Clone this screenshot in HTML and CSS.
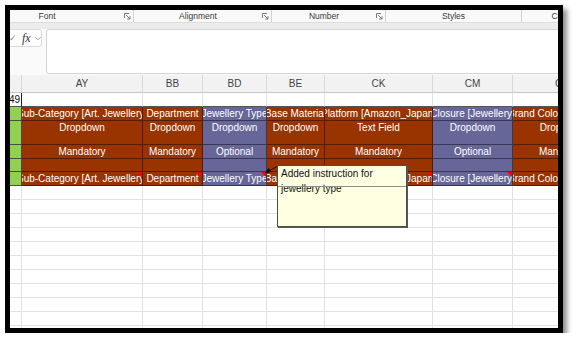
FILE: index.html
```html
<!DOCTYPE html>
<html lang="en">
<head>
    <meta charset="UTF-8">
    <meta name="viewport" content="width=device-width, initial-scale=1.0">
    <title>Listing Template - Comment</title>
    <link rel="stylesheet" href="styles.css">
</head>
<body>
    <div class="frame">
        <!-- ribbon group captions -->
        <div class="ribbon">
            <div class="group group-font">
                <span class="group-label">Font</span>
                <svg class="launcher" viewBox="0 0 7 7"><path d="M0.5 5V0.5H5M2 2l4 4M6 3.2V6H3.2" /></svg>
            </div>
            <div class="group group-align">
                <span class="group-label">Alignment</span>
                <svg class="launcher" viewBox="0 0 7 7"><path d="M0.5 5V0.5H5M2 2l4 4M6 3.2V6H3.2" /></svg>
            </div>
            <div class="group group-number">
                <span class="group-label">Number</span>
                <svg class="launcher" viewBox="0 0 7 7"><path d="M0.5 5V0.5H5M2 2l4 4M6 3.2V6H3.2" /></svg>
            </div>
            <div class="group group-styles">
                <span class="group-label">Styles</span>
            </div>
            <div class="group group-cells">
                <span class="group-label">Cells</span>
            </div>
        </div>

        <!-- formula bar -->
        <div class="formula-bar">
            <div class="fx-box">
                <span class="tick">&#10003;</span>
                <span class="fx">fx</span>
                <svg class="chevron" viewBox="0 0 7 5"><path d="M0.5 1l3 3 3-3" /></svg>
            </div>
            <div class="formula-input"></div>
        </div>

        <!-- sheet -->
        <div class="sheet">
            <div class="cell head"></div>
            <div class="cell head">AY</div>
            <div class="cell head">BB</div>
            <div class="cell head">BD</div>
            <div class="cell head">BE</div>
            <div class="cell head">CK</div>
            <div class="cell head">CM</div>
            <div class="cell head">CO</div>

            <div class="cell rowhead">49</div>
            <div class="cell blank"></div>
            <div class="cell blank"></div>
            <div class="cell blank"></div>
            <div class="cell blank"></div>
            <div class="cell blank"></div>
            <div class="cell blank"></div>
            <div class="cell blank"></div>

            <div class="cell green"></div>
            <div class="cell brown"><span>Sub-Category [Art. Jewellery]</span></div>
            <div class="cell brown"><span>Department</span></div>
            <div class="cell purple"><span>Jewellery Type</span></div>
            <div class="cell brown"><span>Base Material</span></div>
            <div class="cell brown"><span>Platform [Amazon_Japan]</span></div>
            <div class="cell purple"><span>Closure [Jewellery]</span></div>
            <div class="cell brown"><span>Brand Colour [Jewellery]</span></div>

            <div class="cell green"></div>
            <div class="cell brown top"><span>Dropdown</span></div>
            <div class="cell brown top"><span>Dropdown</span></div>
            <div class="cell purple top"><span>Dropdown</span></div>
            <div class="cell brown top"><span>Dropdown</span></div>
            <div class="cell brown top"><span>Text Field</span></div>
            <div class="cell purple top"><span>Dropdown</span></div>
            <div class="cell brown top"><span>Dropdown</span></div>

            <div class="cell green"></div>
            <div class="cell brown"><span>Mandatory</span></div>
            <div class="cell brown"><span>Mandatory</span></div>
            <div class="cell purple"><span>Optional</span></div>
            <div class="cell brown"><span>Mandatory</span></div>
            <div class="cell brown"><span>Mandatory</span></div>
            <div class="cell purple"><span>Optional</span></div>
            <div class="cell brown"><span>Mandatory</span></div>

            <div class="cell green"></div>
            <div class="cell brown"></div>
            <div class="cell brown"></div>
            <div class="cell purple"></div>
            <div class="cell brown"></div>
            <div class="cell brown"></div>
            <div class="cell purple"></div>
            <div class="cell brown"></div>

            <div class="cell green"></div>
            <div class="cell brown note"><span>Sub-Category [Art. Jewellery]</span></div>
            <div class="cell brown note"><span>Department</span></div>
            <div class="cell purple note"><span>Jewellery Type</span></div>
            <div class="cell brown note"><span>Base Material</span></div>
            <div class="cell brown note"><span>Platform [Amazon_Japan]</span></div>
            <div class="cell purple note"><span>Closure [Jewellery]</span></div>
            <div class="cell brown"><span>Brand Colour [Jewellery]</span></div>

            <!-- empty rows below the header block -->
            <div class="strip"></div>
            <div class="strip"></div>
            <div class="strip"></div>
            <div class="strip"></div>
            <div class="strip"></div>
            <div class="strip"></div>
            <div class="strip"></div>
            <div class="strip"></div>

            <svg class="comment-arrow" viewBox="0 0 16 10"><line x1="15" y1="2" x2="4" y2="8" /><polygon points="2.5,8.8 7.4,7.7 5.6,4.5" /></svg>
            <div class="comment">Added instruction for jewellery type</div>
        </div>
    </div>
</body>
</html>
```

FILE: styles.css
```css
* {
    box-sizing: border-box;
}
body {
    margin: 0;
    background-color: #fff;
    font-family: "Liberation Sans", Arial, sans-serif;
}
.frame {
    width: 558px;
    height: 328px;
    margin: 5px 0 0 5px;
    border: 5px solid #000;
    box-shadow: 4px 4px 5px rgba(0, 0, 0, 0.45);
    background-color: #fff;
    overflow: hidden;
}

/* ribbon captions */
.ribbon {
    display: flex;
    height: 13px;
    background-color: #f9f9f9;
    border-bottom: 1px solid #dcdcdc;
    font-size: 8.5px;
    color: #3a3a3a;
}
.group {
    display: flex;
    align-items: center;
    flex: none;
    height: 100%;
    padding-right: 2px;
    border-right: 1px solid #d2d2d2;
}
.group-label {
    flex: 1;
    text-align: center;
}
.launcher {
    width: 7px;
    height: 7px;
    fill: none;
    stroke: #7a7a7a;
    stroke-width: 1;
}
.group-font {
    width: 164px;
    margin-left: -40px;
}
.group-align {
    width: 138px;
}
.group-number {
    width: 114px;
}
.group-styles {
    width: 136px;
    padding-right: 0;
}
.group-cells {
    width: 80px;
    border-right: none;
}

/* formula bar */
.formula-bar {
    display: flex;
    align-items: flex-start;
    height: 52px;
    padding-top: 0;
    border-top: 6px solid #ececec;
    background-color: #fafafa;
}
.fx-box {
    display: flex;
    align-items: center;
    width: 38px;
    height: 18px;
    margin-left: -6px;
    padding-left: 4px;
    background-color: #fff;
    border: 1px solid #dadada;
    border-radius: 3px;
}
.tick {
    font-size: 9px;
    color: #8a8a8a;
    width: 6px;
}
.fx {
    margin-left: 7px;
    font-family: "Liberation Serif", serif;
    font-style: italic;
    font-size: 12px;
    color: #333;
}
.chevron {
    width: 6px;
    height: 5px;
    margin-left: 4px;
    fill: none;
    stroke: #888;
    stroke-width: 1;
}
.formula-input {
    flex: 1;
    height: 45px;
    margin-left: 4px;
    margin-right: -6px;
    background-color: #fff;
    border: 1px solid #d4d4d4;
    border-radius: 3px;
}

/* sheet grid */
.sheet {
    position: relative;
    display: grid;
    grid-template-columns: 12px 121px 60px 64px 58px 108px 80px 100px;
    grid-template-rows: 18px 14px 14px 24px 14px 13px 14px 1fr;
    width: max-content;
    height: 253px;
    font-size: 10px;
}
.cell {
    display: flex;
    align-items: center;
    justify-content: center;
    overflow: hidden;
    white-space: nowrap;
    line-height: 12px;
    border-right: 1px solid #e1e1e1;
    border-bottom: 1px solid #e1e1e1;
}
.cell span {
    flex: none;
}
.head {
    background-color: #f2f2f2;
    border-right-color: #d8d8d8;
    border-bottom-color: #c4c4c4;
    color: #444;
}
.rowhead {
    justify-content: flex-end;
    padding-right: 1px;
    border-right: 1px solid #222;
    border-bottom-color: #555;
    color: #111;
}
.blank {
    border-bottom-color: #555;
}
.green {
    background-color: #92d050;
    border-color: #4a4a4a;
}
.brown,
.purple {
    color: #fff;
    border-color: rgba(0, 0, 0, 0.45);
}
.brown {
    background-color: #993300;
}
.purple {
    background-color: #666699;
}
.top {
    align-items: flex-start;
    padding-top: 1px;
}
.note {
    position: relative;
}
.note::after {
    content: "";
    position: absolute;
    top: 0;
    right: 0;
    border-left: 5px solid transparent;
    border-top: 5px solid #f00;
}
.strip {
    border-right: 1px solid #e1e1e1;
    background: repeating-linear-gradient(#fff 0 13px, #e1e1e1 13px 14px);
}

/* comment popup */
.comment {
    position: absolute;
    left: 267px;
    top: 90px;
    width: 130px;
    height: 62px;
    padding: 0 3px;
    background-color: #ffffe1;
    border: 1px solid #4d4d4d;
    box-shadow: 1px 1px 0 #5a5a5a;
    font-size: 10px;
    line-height: 15px;
    color: #111;
}
.comment::after {
    content: "";
    position: absolute;
    left: 0;
    right: 0;
    top: 20px;
    height: 1px;
    background-color: #8c8c8c;
}
.comment-arrow {
    position: absolute;
    left: 253px;
    top: 89px;
    width: 16px;
    height: 10px;
    stroke: #111;
    stroke-width: 1;
    fill: #111;
}
```
